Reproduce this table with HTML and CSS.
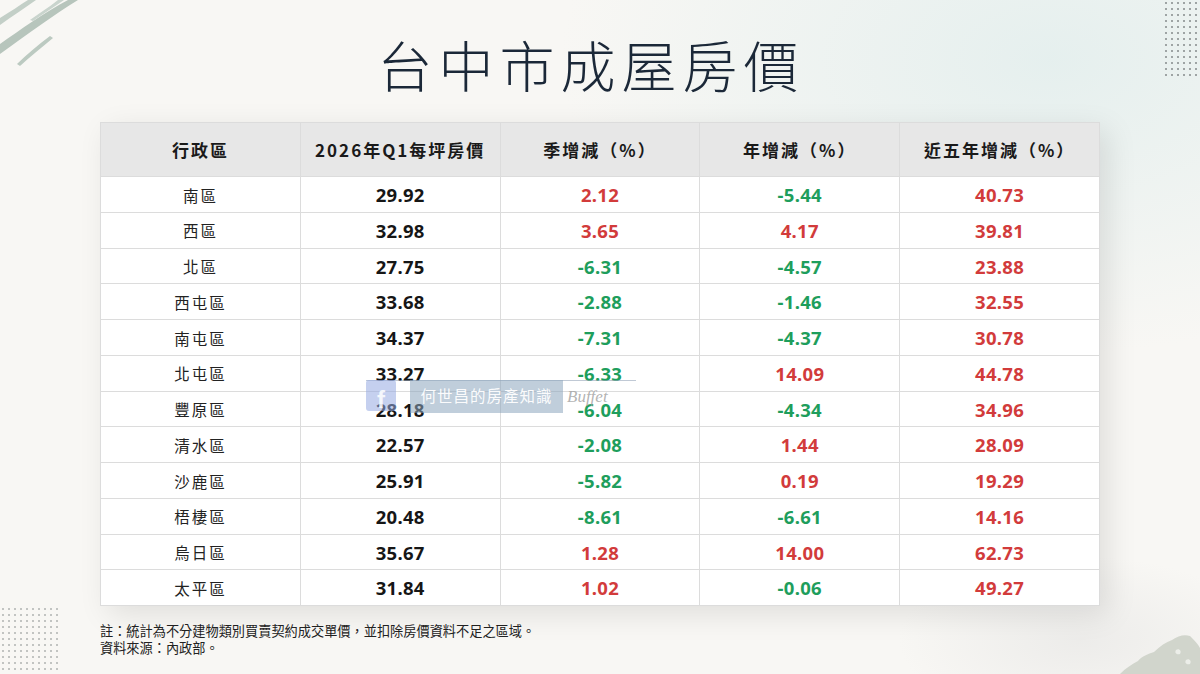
FILE: index.html
```html
<!DOCTYPE html>
<html lang="zh-Hant">
<head>
<meta charset="utf-8">
<title>台中市成屋房價</title>
<link rel="stylesheet" href="styles.css">
</head>
<body>
<div class="page">
  <svg class="brush" width="120" height="80" viewBox="0 0 120 80">
    <path d="M0 44 C20 30 45 12 68 0 L78 0 C55 14 28 34 0 54 Z" fill="#b7c5bc"/>
    <path d="M0 18 C10 12 20 5 28 0 L36 0 C25 8 12 16 0 25 Z" fill="#c3cfc7"/>
    <path d="M17 64 C27 54 38 45 50 36 L53 38 C42 47 30 57 20 66 Z" fill="#bccac1"/>
    <path d="M58 0 C48 8 38 14 30 20 L33 21 C43 14 54 7 64 0 Z" fill="#c9d4cd"/>
  </svg>
  <div class="dots dots-tr"></div>
  <div class="dots dots-bl"></div>
  <svg class="blob" width="80" height="40" viewBox="0 0 80 40">
    <path d="M0 40 C6 34 12 30 18 27 C22 22 28 20 34 18 C40 12 46 8 52 6 C58 2 64 0 70 2 C74 6 78 10 80 14 L80 40 Z" fill="#d1d5cc"/>
    <path d="M56 16 C59 14 62 17 60 20 C57 21 54 19 56 16 Z" fill="#eceee9"/>
    <path d="M66 26 C69 24 72 27 70 30 C67 31 64 29 66 26 Z" fill="#eceee9"/>
  </svg>

  <h1 class="title">台中市成屋房價</h1>

  <div class="table-wrap">
    <table class="prices">
      <thead>
        <tr>
          <th>行政區</th>
          <th>2026年Q1每坪房價</th>
          <th>季增減（%）</th>
          <th>年增減（%）</th>
          <th>近五年增減（%）</th>
        </tr>
      </thead>
      <tbody>
        <tr><td class="name">南區</td><td class="num">29.92</td><td class="up">2.12</td><td class="down">-5.44</td><td class="up">40.73</td></tr>
        <tr><td class="name">西區</td><td class="num">32.98</td><td class="up">3.65</td><td class="up">4.17</td><td class="up">39.81</td></tr>
        <tr><td class="name">北區</td><td class="num">27.75</td><td class="down">-6.31</td><td class="down">-4.57</td><td class="up">23.88</td></tr>
        <tr><td class="name">西屯區</td><td class="num">33.68</td><td class="down">-2.88</td><td class="down">-1.46</td><td class="up">32.55</td></tr>
        <tr><td class="name">南屯區</td><td class="num">34.37</td><td class="down">-7.31</td><td class="down">-4.37</td><td class="up">30.78</td></tr>
        <tr><td class="name">北屯區</td><td class="num">33.27</td><td class="down">-6.33</td><td class="up">14.09</td><td class="up">44.78</td></tr>
        <tr><td class="name">豐原區</td><td class="num">28.18</td><td class="down">-6.04</td><td class="down">-4.34</td><td class="up">34.96</td></tr>
        <tr><td class="name">清水區</td><td class="num">22.57</td><td class="down">-2.08</td><td class="up">1.44</td><td class="up">28.09</td></tr>
        <tr><td class="name">沙鹿區</td><td class="num">25.91</td><td class="down">-5.82</td><td class="up">0.19</td><td class="up">19.29</td></tr>
        <tr><td class="name">梧棲區</td><td class="num">20.48</td><td class="down">-8.61</td><td class="down">-6.61</td><td class="up">14.16</td></tr>
        <tr><td class="name">烏日區</td><td class="num">35.67</td><td class="up">1.28</td><td class="up">14.00</td><td class="up">62.73</td></tr>
        <tr><td class="name">太平區</td><td class="num">31.84</td><td class="up">1.02</td><td class="down">-0.06</td><td class="up">49.27</td></tr>
      </tbody>
    </table>
    <div class="watermark">
      <span class="wm-fb">f</span>
      <span class="wm-text">何世昌的房產知識</span>
      <span class="wm-sign">Buffet</span>
    </div>
  </div>

  <div class="notes">
    <p>註：統計為不分建物類別買賣契約成交單價，並扣除房價資料不足之區域。</p>
    <p>資料來源：內政部。</p>
  </div>
</div>
</body>
</html>
```

FILE: styles.css
```css
html, body {
  margin: 0;
  padding: 0;
}
body {
  width: 1200px;
  height: 674px;
  overflow: hidden;
  font-family: "Noto Sans CJK TC", "Noto Sans", sans-serif;
}
.page {
  position: relative;
  width: 1200px;
  height: 674px;
  overflow: hidden;
  background:
    radial-gradient(ellipse 700px 420px at 1050px 60px, rgba(226, 238, 237, 0.85), rgba(226, 238, 237, 0) 70%),
    radial-gradient(ellipse 260px 120px at 1080px 640px, rgba(215, 215, 215, 0.35), rgba(215, 215, 215, 0) 70%),
    #f8f7f4;
}
.brush {
  position: absolute;
  left: 0;
  top: 0;
}
.dots {
  position: absolute;
  background-image: radial-gradient(circle, #9ea4a4 0.9px, transparent 1.2px);
  background-size: 6px 6px;
}
.dots-tr {
  left: 1163px;
  top: 0;
  width: 34px;
  height: 80px;
}
.dots-bl {
  left: 0;
  top: 606px;
  width: 62px;
  height: 68px;
  background-image: radial-gradient(circle, #c2c4c2 0.9px, transparent 1.2px);
}
.blob {
  position: absolute;
  right: 0;
  bottom: 0;
}
.title {
  margin: 0;
  padding-top: 35px;
  height: 122px;
  box-sizing: border-box;
  text-align: center;
  font-family: "Noto Sans CJK TC", sans-serif;
  font-weight: 300;
  font-size: 55px;
  line-height: 56px;
  letter-spacing: 6px;
  padding-left: 0;
  padding-right: 18px;
  color: #1b2838;
  position: relative;
}
.table-wrap {
  position: relative;
  width: 1000px;
  margin: 0 auto;
  box-shadow: 8px 8px 28px rgba(0, 0, 0, 0.10);
}
.prices {
  width: 1000px;
  border-collapse: collapse;
  table-layout: fixed;
  background: #ffffff;
}
.prices th,
.prices td {
  border: 1px solid #dcdcdc;
  text-align: center;
  padding: 0;
}
.prices th {
  height: 53px;
  background: #e7e7e7;
  font-family: "Noto Sans CJK TC", sans-serif;
  font-weight: 700;
  font-size: 17px;
  letter-spacing: 2px;
  color: #1a1a1a;
}
.prices td {
  height: 32.75px;
  font-family: "Noto Sans", "Noto Sans CJK TC", sans-serif;
  font-weight: 700;
  font-size: 18.5px;
  letter-spacing: 0.3px;
  line-height: 1;
  padding-top: 2px;
}
.prices td.name {
  font-family: "Noto Sans CJK TC", sans-serif;
  font-weight: 400;
  font-size: 15.5px;
  letter-spacing: 2px;
  color: #222;
}
.prices td.num { color: #161616; }
.prices td.up { color: #d23b3b; }
.prices td.down { color: #1e9e5c; }

.watermark {
  position: absolute;
  left: 266px;
  top: 258px;
  display: flex;
  align-items: stretch;
  height: 32px;
  border-top: 1px solid rgba(150, 165, 185, 0.6);
  width: 270px;
}
.wm-fb {
  width: 30px;
  height: 31px;
  background: rgba(150, 170, 225, 0.55);
  color: rgba(255, 255, 255, 0.85);
  border-radius: 3px;
  font-family: "Liberation Sans", sans-serif;
  font-weight: 700;
  font-size: 24px;
  line-height: 40px;
  text-align: center;
  overflow: hidden;
  margin-top: -1px;
}
.wm-text {
  margin-left: 14px;
  width: 153px;
  background: rgba(140, 165, 190, 0.55);
  color: rgba(255, 255, 255, 0.95);
  font-family: "Noto Sans CJK TC", sans-serif;
  font-size: 15.5px;
  line-height: 31px;
  letter-spacing: 1px;
  text-align: center;
  margin-top: -1px;
}
.wm-sign {
  margin-left: 4px;
  font-family: "Liberation Serif", serif;
  font-style: italic;
  font-size: 17px;
  line-height: 31px;
  color: rgba(160, 160, 160, 0.8);
}
.notes {
  margin-left: 100px;
  margin-top: 16px;
  font-family: "Noto Sans CJK TC", sans-serif;
  font-size: 13.2px;
  line-height: 17px;
  color: #222;
}
.notes p {
  margin: 0;
}
```
